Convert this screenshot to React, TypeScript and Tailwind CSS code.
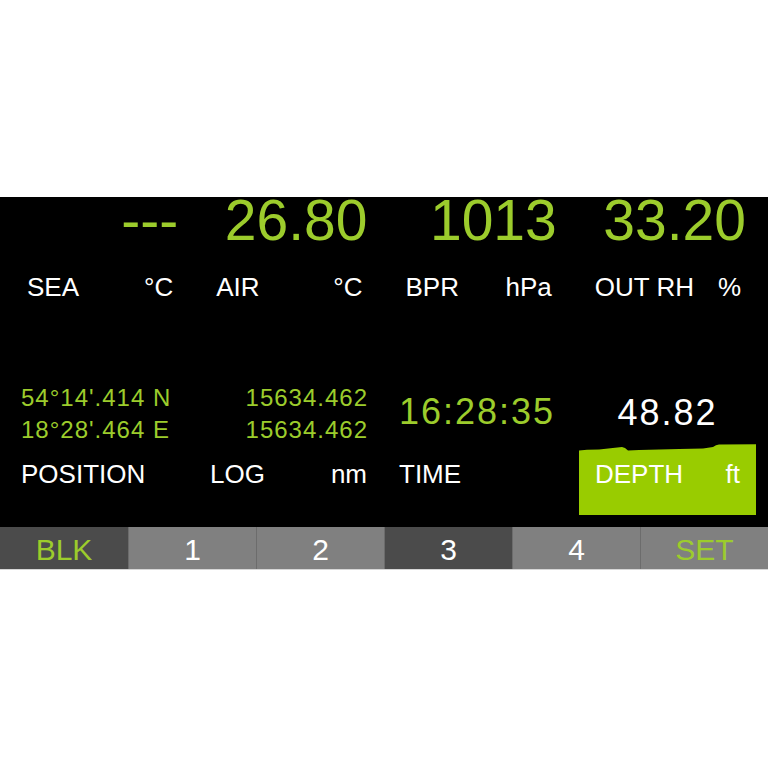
const GREEN = "text-[#9ccc2c]";

const top = [
  { value: "---", label: "SEA", unit: "°C" },
  { value: "26.80", label: "AIR", unit: "°C" },
  { value: "1013", label: "BPR", unit: "hPa" },
  { value: "33.20", label: "OUT RH", unit: "%" },
];

const buttons = [
  { label: "BLK", dark: true, green: true },
  { label: "1", dark: false, green: false },
  { label: "2", dark: false, green: false },
  { label: "3", dark: true, green: false },
  { label: "4", dark: false, green: false },
  { label: "SET", dark: false, green: true },
];

export default function App() {
  return (
    <div className="min-h-screen bg-white pt-[197px] font-['Liberation_Sans',Arial,sans-serif]">
      <div className="h-[330px] bg-black flex flex-col">
        {/* upper readings */}
        <div className="grid grid-cols-4 gap-x-[43px] px-[27px]">
          {top.map((t) => (
            <div key={t.label} className="flex flex-col">
              <div className={`text-right text-[57px] leading-none -mt-[5px] -mr-[5px] ${GREEN}`}>{t.value}</div>
              <div className="mt-[25px] flex justify-between text-[26px] leading-none text-white">
                <span>{t.label}</span>
                <span>{t.unit}</span>
              </div>
            </div>
          ))}
        </div>

        {/* lower readings */}
        <div className="mt-[82px] flex pl-[21px]">
          <div className="w-[189px] flex flex-col">
            <div className={`h-[64px] text-[24px] leading-[32px] tracking-[1px] ${GREEN}`}>
              <div>54°14'.414 N</div>
              <div>18°28'.464 E</div>
            </div>
            <div className="pt-[15px] text-[26px] leading-none text-white">POSITION</div>
          </div>

          <div className="w-[157px] flex flex-col">
            <div className={`h-[64px] text-right text-[24px] leading-[32px] tracking-[1px] -mr-[1px] ${GREEN}`}>
              <div>15634.462</div>
              <div>15634.462</div>
            </div>
            <div className="pt-[15px] flex justify-between text-[26px] leading-none text-white">
              <span>LOG</span>
              <span>nm</span>
            </div>
          </div>

          <div className="ml-[32px] w-[180px] flex flex-col">
            <div className={`h-[64px] flex items-center text-[36px] leading-none tracking-[2px] -mt-[2px] ${GREEN}`}>
              16:28:35
            </div>
            <div className="pt-[17px] text-[26px] leading-none text-white">TIME</div>
          </div>

          <div className="w-[177px] flex flex-col">
            <div className="h-[62px] flex items-center justify-center text-[36px] leading-none tracking-[2px] text-white">
              48.82
            </div>
            <div className="relative h-[71px] bg-[#99cc00] px-[16px] pt-[17px]">
              <svg
                className="absolute left-0 top-0 w-full h-[8px]"
                viewBox="0 0 177 8"
                preserveAspectRatio="none"
              >
                <polygon
                  fill="#000"
                  points="0,0 177,0 177,0.3 140,0.6 137,1.2 134,3 124,4.4 100,5 80,5.6 60,6 49,6.6 46,4 43,3 36,3.8 20,5.4 8,5.8 0,6.4"
                />
              </svg>
              <div className="flex justify-between text-[26px] leading-none text-white">
                <span>DEPTH</span>
                <span>ft</span>
              </div>
            </div>
          </div>
        </div>
      </div>

      {/* soft keys */}
      <div className="grid grid-cols-6 h-[43px] border-b border-[#d6d6d6]">
        {buttons.map((b, i) => (
          <div
            key={b.label}
            className={`flex items-center justify-center pt-[3px] text-[30px] leading-none ${
              b.dark ? "bg-[#4b4b4b]" : "bg-[#808080]"
            } ${b.green ? "text-[#9ccc2c]" : "text-white"} ${i > 0 ? "border-l border-[#6c6c6c]" : ""}`}
          >
            {b.label}
          </div>
        ))}
      </div>
    </div>
  );
}
